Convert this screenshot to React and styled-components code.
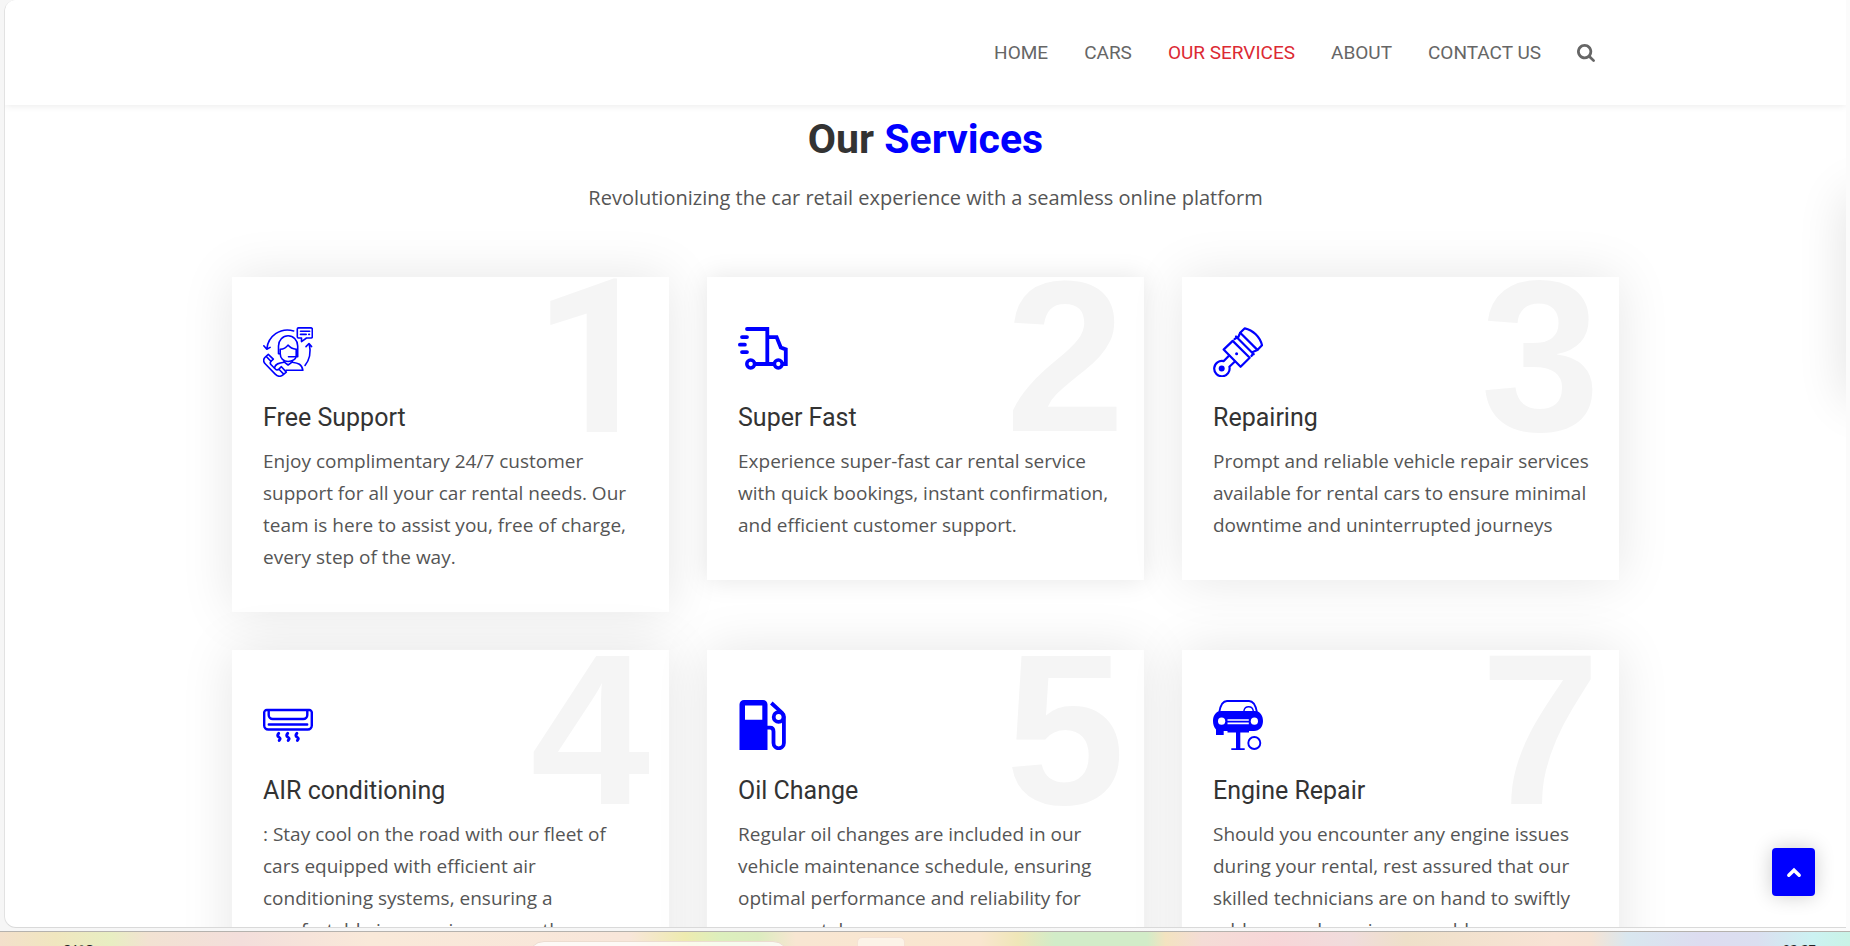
import React from 'react';
import styled, { createGlobalStyle, css } from 'styled-components';

const BLUE = '#0000ff';

const GlobalStyle = createGlobalStyle`
  * { box-sizing: border-box; }
  body {
    margin: 0;
    background: #f6f6f6;
    font-family: "Open Sans", sans-serif;
    color: #555;
  }
  h1, h2, p, ul { margin: 0; padding: 0; }
`;

const Desktop = styled.div`
  display: flex;
  flex-direction: column;
  height: 100vh;
  overflow: hidden;
  background: linear-gradient(90deg, #f6f6f6 50%, #fbfbfb 90%);
`;

const BrowserPane = styled.div`
  position: relative;
  flex: 1;
  min-height: 0;
  margin: 0 4px 3px 4px;
  display: flex;
  flex-direction: column;
  overflow: hidden;
  background: #fff;
  border-left: 1px solid #e2e2e2;
  border-bottom: 1px solid #d9d9d9;
  border-radius: 12px 0 0 12px;
`;

const Header = styled.header`
  position: relative;
  z-index: 2;
  flex: none;
  height: 105px;
  background: #fff;
  box-shadow: 0 0 8px rgba(0, 0, 0, 0.1);
`;

const container = css`
  width: 100%;
  max-width: 1387px;
  margin: 0 auto;
`;

const Nav = styled.nav`
  ${container}
  height: 100%;
  padding-right: 24px;
  display: flex;
  align-items: center;
  justify-content: flex-end;
`;

const NavList = styled.ul`
  display: flex;
  align-items: center;
  gap: 36px;
  list-style: none;
`;

const NavLink = styled.a`
  font-family: Roboto, sans-serif;
  font-size: 19px;
  line-height: 24px;
  text-transform: uppercase;
  text-decoration: none;
  color: ${({ $active }) => ($active ? '#dc2a33' : '#666')};
`;

const SearchButton = styled.button`
  display: block;
  padding: 0;
  border: 0;
  background: none;
  color: #666;
  cursor: pointer;
  svg { display: block; width: 18px; height: 18px; }
`;

const Section = styled.main`
  ${container}
  flex: 1;
  min-height: 0;
  padding-top: 9px;
`;

const Heading = styled.h1`
  font-family: Roboto, sans-serif;
  font-size: 41px;
  font-weight: 700;
  line-height: 50px;
  text-align: center;
  color: #333;
  span { color: ${BLUE}; }
`;

const Lead = styled.p`
  margin: 19px 0 64px;
  font-size: 20px;
  line-height: 30px;
  text-align: center;
`;

const Cards = styled.div`
  display: grid;
  grid-template-columns: repeat(3, minmax(0, 1fr));
  gap: 38px;
  align-items: start;
`;

const Card = styled.article`
  position: relative;
  padding: 50px 28px 39px 31px;
  background: #fff;
  box-shadow: 0 0 ${({ $raised }) => ($raised ? '25px' : '50px')} rgba(0, 0, 0, 0.1);
`;

const BigNumber = styled.span`
  position: absolute;
  top: 0;
  right: ${({ $plain }) => ($plain ? '13px' : '19px')};
  font-family: ${({ $plain }) => ($plain ? 'Roboto' : '"Liberation Sans"')}, Arial, sans-serif;
  font-size: 215px;
  font-weight: 700;
  line-height: ${({ $plain }) => ($plain ? '164px' : '160px')};
  color: #f5f5f5;
`;

const CardIcon = styled.svg`
  display: block;
  width: 50px;
  height: 50px;
  color: ${BLUE};
`;

const CardTitle = styled.h2`
  margin: 26px 0 12px;
  font-family: Roboto, sans-serif;
  font-size: 25px;
  font-weight: 400;
  line-height: 30px;
  color: #333;
`;

const CardText = styled.p`
  position: relative;
  font-size: 19px;
  line-height: 32px;
`;

const SidePanel = styled.aside`
  position: absolute;
  top: 195px;
  left: 100%;
  width: 60px;
  height: 205px;
  box-shadow: 0 0 50px rgba(0, 0, 0, 0.12);
`;

const ToTop = styled.button`
  position: absolute;
  z-index: 3;
  right: 31px;
  bottom: 31px;
  display: grid;
  place-items: center;
  width: 43px;
  height: 48px;
  padding: 0;
  border: 0;
  border-radius: 4px;
  background: ${BLUE};
  color: #fff;
  box-shadow: 0 0 20px rgba(0, 0, 0, 0.2);
  cursor: pointer;
`;

const Taskbar = styled.footer`
  flex: none;
  position: relative;
  height: 15px;
  overflow: hidden;
  display: flex;
  align-items: flex-start;
  justify-content: space-between;
  padding: 8px 34px 0 64px;
  border-top: 1px solid #b5b2ae;
  font-size: 13px;
  line-height: 18px;
  color: #222;
  background: linear-gradient(90deg,
    #f3e0cb 0%, #f0e6bf 3%, #e8eec2 6%, #f2e2d2 8%, #f3dedb 13%, #f9e9d9 20%,
    #f8e6da 34%, #eeebb0 37%, #dcefbd 39%, #dcecbf 41%, #f8e6d2 43%, #f9e6cf 53%,
    #efe6b8 55%, #d2ecc8 57%, #d2ecc8 62%, #f3e3c0 63%, #f4dcd6 65%, #f7d6d8 69%,
    #f0dcdc 73%, #eee0c9 76%, #f8e3d5 84%, #f6e3d4 86%, #d9e7ef 88%, #dddcf0 92%,
    #dbdff0 95%, #ccf2f2 98%, #c9f3e6 100%);
`;

const TaskSearch = styled.div`
  position: absolute;
  left: 528px;
  top: 9px;
  width: 261px;
  height: 40px;
  border: 1px solid #ecdcd0;
  border-radius: 16px;
  background: rgba(255, 255, 255, 0.75);
`;

const TaskApp = styled.div`
  position: absolute;
  left: 857px;
  top: 5px;
  width: 48px;
  height: 48px;
  border: 1px solid #f5e2d4;
  border-radius: 5px;
  background: rgba(255, 255, 255, 0.5);
`;

const line = {
  fill: 'none',
  stroke: 'currentColor',
  strokeLinecap: 'round',
  strokeLinejoin: 'round',
};

const SupportIcon = () => (
  <CardIcon viewBox="0 0 50 50" aria-hidden="true">
    <g {...line} strokeWidth="1.600">
      <path d="M35.5 .9h12.6a1.2 1.2 0 0 1 1.2 1.2v7.700a1.200 1.200 0 0 1-1.200 1.200H43.500l-5 3.600V11h-3a1.200 1.200 0 0 1-1.200-1.200V2.100A1.200 1.200 0 0 1 35.500 .9z" />
      <path d="M37.500 4.200h9.200M37.500 7.400h5.700M45.800 7.400h.6" />
      <path d="M30.700 3.900C17 .2 5.200 9 3.800 21.800M.8 18.800l3 3.500 3.300-1.900" />
      <path d="M42 38.500c4.800-6 6-13.600 4.300-21.500M43 19.600l3-3.100 2.600 3.100" />
      <path d="M17.200 26.800h-1.700V19a9.600 10.200 0 0 1 19.200 0v10.700H25.500M15.500 21.500v5M34.700 22.500h-1.500v6.500" />
      <path d="M17.200 22.300c3.400-.2 6-1.600 7.800-4.200 2 2.600 4.600 4 8.100 4.200M17.200 22.300v4.500c0 4.700 3.400 7.700 7.900 7.700s7.800-2.600 8-5" />
      <path d="M21 33.800v1.400c-5.200.8-8.600 1.700-9.500 5.500M29.300 33.800v1.400c6 .8 9.600 2 10.600 8.100H23" />
      <path d="M21.300 35.200l3.800 2.800 3.900-2.800" />
      <path d="M5.300 27.300l-3 2.700c-2.100 2.100-2 4.800.1 7l9.800 10.100c2.500 2.500 5.400 2.700 7.800.7l3.300-2.700-4.900-5.400-2.600 2.500c-1.200 1-2.500.8-3.500-.2l-4.200-4.300c-1-1-1-2.400 0-3.400l2.200-2.200zM3.200 29.400l4.900 5.100M15.900 42.300l4.800 4.800" />
    </g>
  </CardIcon>
);

const TruckIcon = () => (
  <CardIcon viewBox="0 0 50 50" aria-hidden="true">
    <g {...line} strokeWidth="3.800">
      <path d="M9 2h20.300v35M31 10.100h7.600l4.200 10.400 5 1.900V37h-3M17.500 37H35" strokeLinejoin="miter" />
      <path d="M4 10.100h5M1.900 17.700h5M4 25.100h5" />
      <circle cx="12.700" cy="37" r="3.900" strokeWidth="3.500" />
      <circle cx="40.300" cy="37" r="3.900" strokeWidth="3.500" />
    </g>
  </CardIcon>
);

const PistonIcon = () => (
  <CardIcon viewBox="0 0 50 50" aria-hidden="true">
    <g {...line} strokeWidth="2.200">
      <path d="M31.800 1.300C40 3 47 10 49 18.200l-4.600 4.700L27.200 5.800z" />
      <path d="M23 9.500l17.700 17.700M27.200 5.800l-2.400 5.500M44.400 22.900l-5.200 2.300" />
      <path d="M19.700 13.900l-9.100 8.700 17 17.200 9.100-9z" />
      <path d="M21.500 12.200l2.500-1.700M38.400 29l1.800-2.300" />
      <path d="M16.200 28.500l-5.400 5.600a7.700 7.700 0 1 0 5.600 5.700l5.500-5.300" />
    </g>
    <circle cx="8.700" cy="41.400" r="3" fill="currentColor" />
    <circle cx="23.600" cy="26.700" r="1.500" fill="currentColor" />
  </CardIcon>
);

const AirIcon = () => (
  <CardIcon viewBox="0 0 50 50" aria-hidden="true">
    <g {...line} strokeWidth="2.400">
      <path d="M3.700 10h42.600a2.500 2.500 0 0 1 2.500 2.500V25.500a4 4 0 0 1-4 4H5.200a4 4 0 0 1-4-4V12.500A2.500 2.500 0 0 1 3.700 10z" />
      <path d="M5.700 10.500v4.500a4 4 0 0 0 4 4h30.600a4 4 0 0 0 4-4v-4.500M5.800 24.500h38.400" />
      <path strokeWidth="2.900" d="M15.700 33.400c-1.600 1.600-1.200 2.700.2 3.700s1.800 1.900.3 3.300M24.700 33.400c-1.600 1.600-1.200 2.700.2 3.700s1.800 1.900.3 3.300M33.900 33.400c-1.600 1.600-1.200 2.700.2 3.700s1.800 1.900.3 3.300" />
    </g>
  </CardIcon>
);

const FuelIcon = () => (
  <CardIcon viewBox="0 0 50 50" aria-hidden="true">
    <path
      fill="currentColor"
      fillRule="evenodd"
      d="M6 0h19a4.500 4.500 0 0 1 4.500 4.500V50h-28V4.500A4.500 4.500 0 0 1 6 0zM7 5.600v14.100h17.300V5.600z"
    />
    <g {...line} strokeWidth="3.800" strokeLinecap="butt">
      <path d="M33.300 3l10.800 9.800c1.200 1.100 1.800 2.200 1.800 4v26.300a5.200 5.200 0 0 1-10.400 0V31.500c0-2.500-1.200-3.900-3.500-3.900h-3" />
      <circle cx="40.600" cy="17" r="4.900" />
    </g>
  </CardIcon>
);

const CarIcon = () => (
  <CardIcon viewBox="0 0 50 50" aria-hidden="true">
    <path {...line} strokeWidth="1.800" d="M6.300 12C7.500 5 9.800 1 14 1h22c4.200 0 6.600 4 7.900 11" />
    <path {...line} strokeWidth="1.400" d="M31 12v-1.500a4.700 4.700 0 0 1 9.200 0V12" />
    <path fill="currentColor" d="M8 11h34c5 0 8 4.500 8 10 0 5.800-3.500 10-9 10h-5v1.600h-8.700v15.600h4.400V50H18.300v-1.800H23V32.600h-8.500V31h-3.800v4H3v-5.500C1 27.500 0 24.500 0 21c0-5.500 3-10 8-10z" />
    <circle cx="8.600" cy="21.200" r="3.600" fill="#fff" />
    <circle cx="41.400" cy="21.200" r="3.600" fill="#fff" />
    <path stroke="#fff" strokeWidth="1.700" d="M14.500 20h21.300M14.500 23.300h21.300" />
    <circle cx="41.300" cy="43" r="6" fill="none" stroke="currentColor" strokeWidth="1.900" />
  </CardIcon>
);

const links = ['Home', 'Cars', 'Our Services', 'About', 'Contact Us'];

const services = [
  {
    number: 1,
    title: 'Free Support',
    Icon: SupportIcon,
    text: 'Enjoy complimentary 24/7 customer support for all your car rental needs. Our team is here to assist you, free of charge, every step of the way.',
  },
  {
    number: 2,
    title: 'Super Fast',
    Icon: TruckIcon,
    raised: true,
    text: 'Experience super-fast car rental service with quick bookings, instant confirmation, and efficient customer support.',
  },
  {
    number: 3,
    title: 'Repairing',
    Icon: PistonIcon,
    text: 'Prompt and reliable vehicle repair services available for rental cars to ensure minimal downtime and uninterrupted journeys',
  },
  {
    number: 4,
    title: 'AIR conditioning',
    Icon: AirIcon,
    text: ': Stay cool on the road with our fleet of cars equipped with efficient air conditioning systems, ensuring a comfortable journey in any weather.',
  },
  {
    number: 5,
    title: 'Oil Change',
    Icon: FuelIcon,
    text: 'Regular oil changes are included in our vehicle maintenance schedule, ensuring optimal performance and reliability for every rental.',
  },
  {
    number: 7,
    title: 'Engine Repair',
    Icon: CarIcon,
    text: 'Should you encounter any engine issues during your rental, rest assured that our skilled technicians are on hand to swiftly address and repair any problems.',
  },
];

export default function App() {
  return (
    <Desktop>
      <GlobalStyle />
      <BrowserPane>
        <Header>
          <Nav aria-label="Main">
            <NavList>
              {links.map((label) => (
                <li key={label}>
                  <NavLink href="#" $active={label === 'Our Services'}>{label}</NavLink>
                </li>
              ))}
              <li>
                <SearchButton type="button" aria-label="Search">
                  <svg viewBox="64 128 1664 1664" aria-hidden="true">
                    <path
                      fill="currentColor"
                      d="M1216 832q0-185-131.500-316.500t-316.500-131.500-316.500 131.500-131.500 316.500 131.500 316.500 316.500 131.500 316.500-131.500 131.500-316.500zm512 832q0 52-38 90t-90 38q-54 0-90-38l-343-342q-179 124-399 124-143 0-273.500-55.500t-225-150-150-225-55.500-273.500 55.500-273.500 150-225 225-150 273.500-55.500 273.500 55.500 225 150 150 225 55.500 273.500q0 220-124 399l343 343q37 37 37 90z"
                    />
                  </svg>
                </SearchButton>
              </li>
            </NavList>
          </Nav>
        </Header>
        <Section>
          <Heading>Our <span>Services</span></Heading>
          <Lead>Revolutionizing the car retail experience with a seamless online platform</Lead>
          <Cards>
            {services.map(({ number, title, text, Icon, raised }) => (
              <Card key={number} $raised={raised}>
                <BigNumber $plain={number === 1}>{number}</BigNumber>
                <Icon />
                <CardTitle>{title}</CardTitle>
                <CardText>{text}</CardText>
              </Card>
            ))}
          </Cards>
        </Section>
        <SidePanel />
        <ToTop type="button" aria-label="Back to top">
          <svg width="16" height="12" viewBox="0 0 16 12" aria-hidden="true">
            <path d="M2.800 9.300L8 4.200l5.200 5.100" fill="none" stroke="currentColor" strokeWidth="3.400" strokeLinecap="round" />
          </svg>
        </ToTop>
      </BrowserPane>
      <Taskbar>
        <span>31°C</span>
        <TaskSearch />
        <TaskApp />
        <span>02:27</span>
      </Taskbar>
    </Desktop>
  );
}
